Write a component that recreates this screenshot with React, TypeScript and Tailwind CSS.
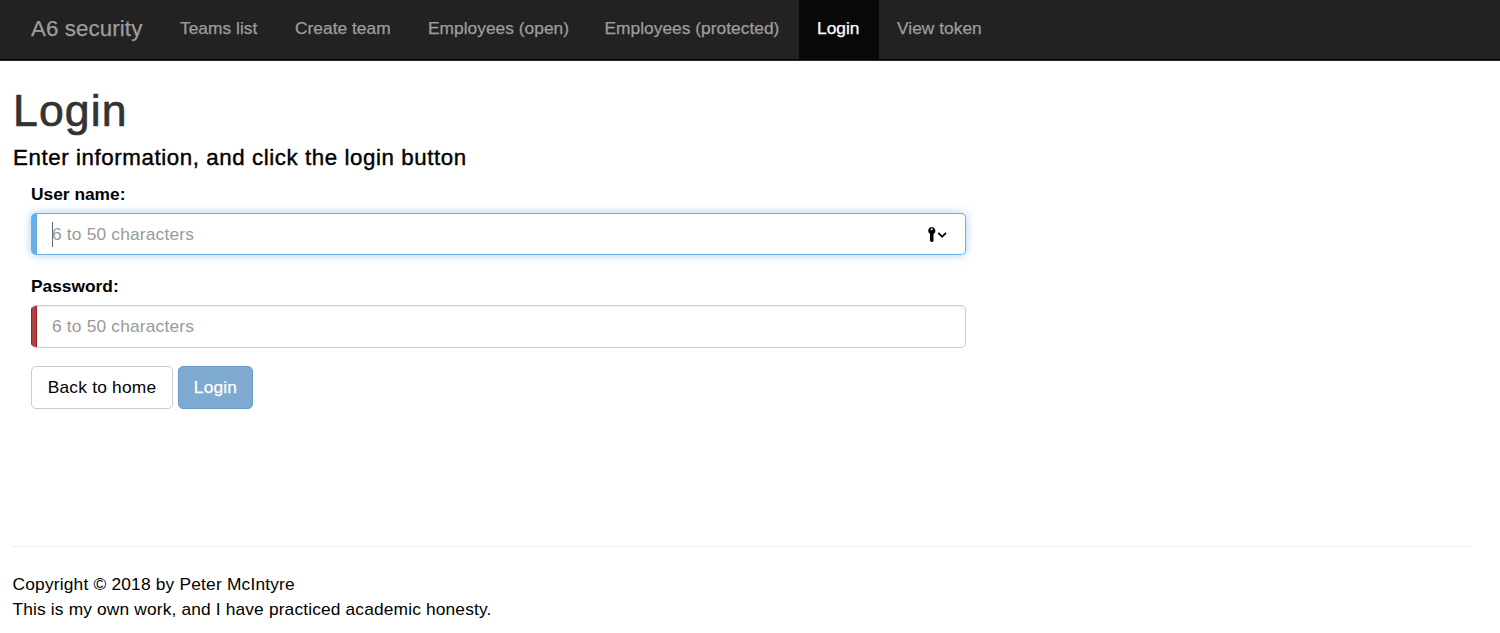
const navItems = [
  { label: 'Teams list', width: 'w-[115px]' },
  { label: 'Create team', width: 'w-[133px]' },
  { label: 'Employees (open)', width: 'w-[176.5px]' },
  { label: 'Employees (protected)', width: 'w-[212.5px]' },
  { label: 'Login', width: 'w-[80px]', active: true },
  { label: 'View token', width: 'w-[123px]' },
];

function Navbar() {
  return (
    <nav className="flex h-[61px] border-b border-[#2a2a2a] bg-[#222] text-[#9d9d9d] shadow-[inset_0_-1px_0_#080808] [-webkit-text-stroke:0.25px]">
      <a className="block w-[162px] shrink-0 pl-[31px] text-[22.3px] leading-[57px] tracking-[0.1px] whitespace-nowrap">
        A6 security
      </a>
      {navItems.map((item) => (
        <a
          key={item.label}
          className={`block h-[59px] shrink-0 pl-[18px] text-[17.35px] leading-[57px] tracking-[0.02px] whitespace-nowrap ${item.width} ${
            item.active ? 'bg-[#080808] text-white' : ''
          }`}
        >
          {item.label}
        </a>
      ))}
    </nav>
  );
}

function KeyMenuIcon() {
  return (
    <svg className="mr-[17px] shrink-0" width="21" height="17" viewBox="0 0 21 17" fill="none">
      <path
        fillRule="evenodd"
        fill="#000"
        d="M4.7 1A3.7 3.7 0 0 0 3 7.9V15l1.2 1h1.2l1.1-1V7.9A3.7 3.7 0 0 0 4.7 1ZM4.7 2.2a1 1 0 1 1 0 2 1 1 0 0 1 0-2Z"
      />
      <path d="m11.2 6.8 3.9 3.9L19 6.8" stroke="#000" strokeWidth="1.7" />
    </svg>
  );
}

export default function App() {
  return (
    <div className="h-[633px] overflow-hidden bg-white font-['Liberation_Sans',Arial,sans-serif] text-[17.35px] text-black">
      <Navbar />
      <main className="h-[485px] pl-[13px]">
        <h1 className="pt-[25px] text-[44.6px] leading-[50px] tracking-[1.1px] text-[#333] [-webkit-text-stroke:0.7px]">Login</h1>
        <h4 className="mt-[9px] text-[22.3px] leading-[25px] tracking-[0.58px] [-webkit-text-stroke:0.4px]">
          Enter information, and click the login button
        </h4>
        <form className="ml-[18px] w-[935px]" onSubmit={(e) => e.preventDefault()}>
          <label className="mt-[12px] block leading-[25px] font-bold">User name:</label>
          <div className="mt-[6px] flex h-[42px] items-center rounded-[5px] border border-l-[6px] border-[#66afe9] pl-[15px] shadow-[0_0_10px_rgba(102,175,233,0.6)]">
            <span className="-mr-px h-[25px] w-px bg-[#666]" />
            <span className="flex-1 tracking-[0.18px] text-[#999]">6 to 50 characters</span>
            <KeyMenuIcon />
          </div>
          <label className="mt-[19px] block leading-[25px] font-bold">Password:</label>
          <div className="mt-[6px] flex h-[43px] items-stretch overflow-hidden rounded-[5px] border border-l-0 border-[#ccc] shadow-[inset_0_1px_1px_rgba(0,0,0,0.075)]">
            <span className="mr-[15px] w-[6px] border-x border-[#a61c1c] bg-[#a94442]" />
            <span className="self-center tracking-[0.18px] text-[#999]">6 to 50 characters</span>
          </div>
          <div className="mt-[18px] flex gap-[5px]">
            <button className="h-[43px] w-[142px] rounded-[5px] border border-[#ccc] bg-white tracking-[0.22px]">Back to home</button>
            <button className="h-[43px] w-[75px] rounded-[5px] border border-[#6d9dc7] bg-[#7ea9d0] tracking-[0.2px] text-white [-webkit-text-stroke:0.25px]">
              Login
            </button>
          </div>
        </form>
      </main>
      <footer className="mr-[28px] ml-[12px] border-t border-[#eee] pt-[25px] pl-[0.5px] leading-[25px]">
        <p className="tracking-[0.19px]">Copyright © 2018 by Peter McIntyre</p>
        <p className="tracking-[0.15px]">This is my own work, and I have practiced academic honesty.</p>
      </footer>
    </div>
  );
}
